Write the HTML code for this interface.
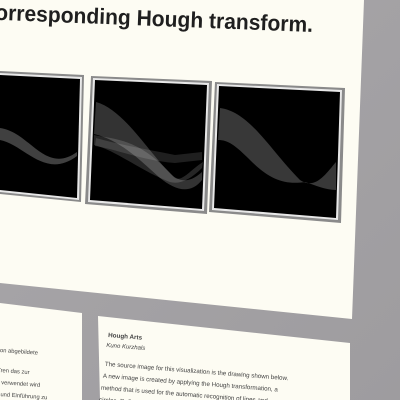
<!DOCTYPE html>
<html><head><meta charset="utf-8"><style>
html,body{margin:0;padding:0;width:400px;height:400px;overflow:hidden;background:#a7a5a8}
svg{display:block}
text{font-family:"Liberation Sans",sans-serif}
</style></head><body>
<svg width="400" height="400" viewBox="0 0 400 400">
<defs>
<linearGradient id="bg" x1="0" y1="0" x2="1" y2="1"><stop offset="0" stop-color="#a9a7aa"/><stop offset="1" stop-color="#9e9c9f"/></linearGradient>
</defs>
<rect width="400" height="400" fill="url(#bg)"/>
<polygon points="0,0 364,0 352,319 0,283" fill="#fdfcf3"/>
<text x="-5" y="20" font-size="22" font-weight="bold" fill="#1f1f1f" textLength="318" lengthAdjust="spacingAndGlyphs" transform="rotate(2.2 0 20)">orresponding Hough transform.</text>

<!-- frame 1 -->
<polygon points="0,71 84,75 81,202 0,194" fill="#8a8a8a"/>
<polygon points="0,73 82,77 79,200 0,192" fill="#e8e8e8"/>
<polygon points="0,75 80,79 77,198 0,190" fill="#000"/>
<path d="M0,128 C30,132 45,175 77,152 L77,156 C45,180 25,145 0,140Z" fill="#fff" opacity="0.25"/>

<!-- frame 2 -->
<polygon points="91,76 212,81 207,214 85,204" fill="#8a8a8a"/>
<polygon points="93,78 209,83 204,211 88,202" fill="#e8e8e8"/>
<polygon points="95,80 207,85 202,209 90,200" fill="#000"/>
<path d="M96,102 C125,110 150,155 173,176 C185,185 195,178 202,172 L202,180 C190,195 175,190 160,178 C140,160 120,140 94,134Z" fill="#fff" opacity="0.2"/>
<path d="M94,135 C120,140 140,140 173,176 C180,185 190,170 203,162 L202,168 C188,182 176,186 165,180 C140,170 115,150 94,145Z" fill="#fff" opacity="0.15"/>
<path d="M96,138 C125,146 150,150 175,155 L202,152 L202,160 L175,163 C140,160 120,150 95,146Z" fill="#fff" opacity="0.12"/>

<!-- frame 3 -->
<polygon points="215,82 345,88 341,223 209,212" fill="#8a8a8a"/>
<polygon points="217,84 342,90 338,220 212,210" fill="#e8e8e8"/>
<polygon points="219,86 340,92 336,218 214,208" fill="#000"/>
<path d="M220,108 C250,112 270,150 300,180 C315,190 325,175 336,162 L336,190 C325,190 315,185 305,182 C285,185 270,180 250,160 C235,145 228,140 218,140Z" fill="#fff" opacity="0.22"/>

<!-- cards -->
<polygon points="0,303 82,313 82,400 0,400" fill="#fdfcf3"/>
<polygon points="98,316 350,343 350,400 100,400" fill="#fdfcf3"/>
<g transform="rotate(4 0 360)" fill="#444" font-size="5.8">
<text x="-2" y="352">ion abgebildete</text>
<text x="-2" y="372">Tren das zur</text>
<text x="-2" y="384">e verwendet wird</text>
<text x="-2" y="396">e und Einführung zu</text>
</g>
<g transform="rotate(4.5 108 337)" fill="#444">
<text x="108" y="337" font-size="6.3" font-weight="bold">Hough Arts</text>
<text x="107" y="347" font-size="6" font-style="italic">Kuno Kurzhals</text>
<text x="107" y="366" font-size="6.2">The source image for this visualization is the drawing shown below.</text>
<text x="106" y="378" font-size="6.2">A new image is created by applying the Hough transformation, a</text>
<text x="105" y="390" font-size="6.2">method that is used for the automatic recognition of lines and</text>
<text x="104" y="402" font-size="6.2">circles. Reflections of ...</text>
</g>
</svg>
</body></html>
